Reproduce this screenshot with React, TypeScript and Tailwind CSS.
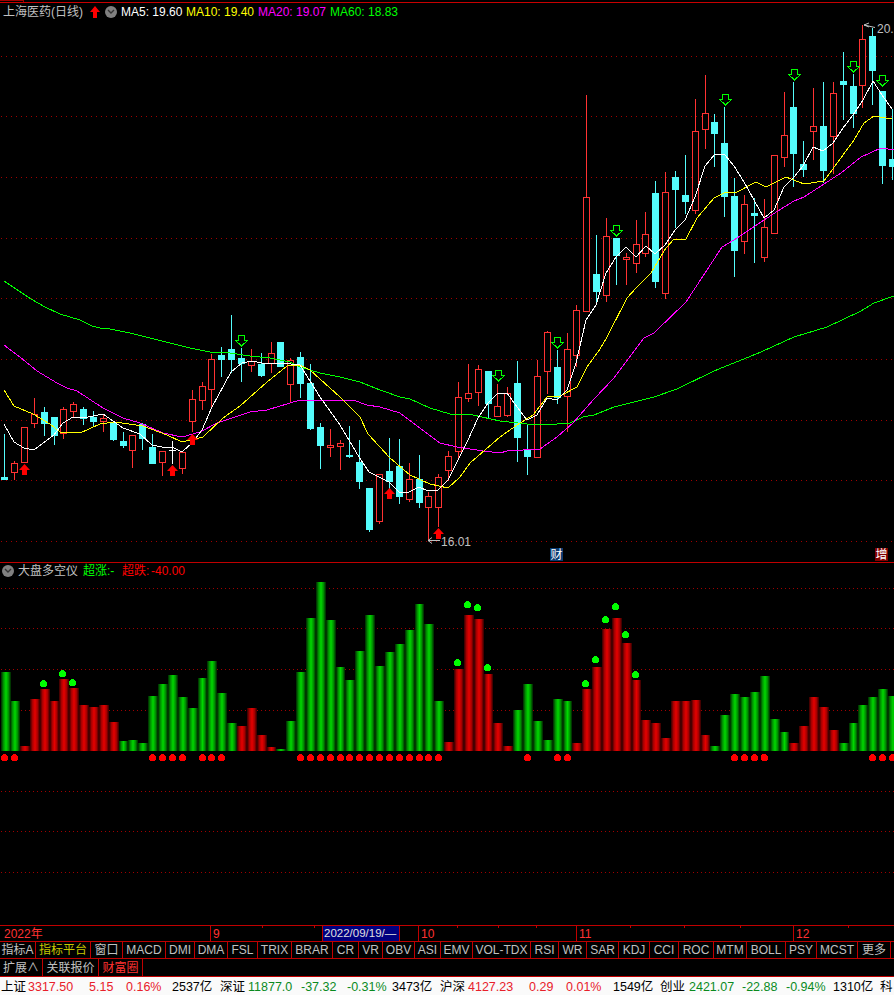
import React from "react";

type Candle = [number, number, number, number, "r" | "c" | "w"];

// hi, body top, body bottom, lo, colour
const candles: Candle[] = [
  [434, 477, 479, 479, "c"], [461, 463, 472, 479, "r"], [427, 427, 462, 462, "r"], [398, 414, 423, 427, "r"],
  [407, 412, 423, 435, "c"], [417, 417, 435, 444, "c"], [407, 409, 433, 438, "r"], [402, 404, 411, 417, "r"],
  [407, 409, 418, 424, "c"], [411, 417, 421, 425, "c"], [414, 418, 421, 431, "r"], [421, 422, 439, 440, "c"],
  [432, 441, 445, 447, "c"], [435, 435, 450, 467, "r"], [423, 424, 438, 449, "c"], [434, 447, 463, 463, "c"],
  [451, 451, 462, 475, "r"], [441, 450, 450, 463, "w"], [452, 452, 468, 473, "r"], [390, 399, 421, 431, "r"],
  [382, 386, 400, 409, "r"], [354, 359, 389, 407, "r"], [347, 355, 359, 376, "c"], [315, 349, 359, 372, "c"],
  [348, 358, 363, 381, "c"], [349, 361, 365, 371, "r"], [353, 364, 375, 376, "c"], [342, 353, 363, 372, "r"],
  [342, 342, 366, 366, "c"], [358, 360, 384, 402, "r"], [352, 357, 383, 397, "c"], [364, 383, 428, 429, "c"],
  [423, 427, 445, 468, "c"], [429, 445, 447, 456, "r"], [440, 443, 446, 469, "r"], [426, 455, 456, 457, "c"],
  [440, 462, 481, 488, "c"], [488, 488, 529, 531, "c"], [474, 474, 521, 523, "r"], [438, 471, 481, 490, "c"],
  [439, 466, 496, 503, "c"], [463, 479, 499, 501, "r"], [455, 479, 502, 507, "c"], [492, 496, 507, 539, "r"],
  [474, 477, 507, 526, "r"], [451, 456, 470, 480, "r"], [382, 397, 451, 457, "r"], [364, 393, 398, 401, "r"],
  [365, 369, 392, 405, "r"], [371, 371, 403, 417, "c"], [384, 406, 416, 416, "r"], [387, 393, 415, 416, "r"],
  [361, 383, 437, 461, "c"], [424, 450, 456, 474, "c"], [360, 376, 457, 457, "r"], [331, 332, 371, 393, "r"],
  [350, 367, 397, 403, "c"], [333, 349, 396, 431, "r"], [305, 310, 355, 366, "r"], [95, 197, 311, 311, "r"],
  [235, 274, 291, 302, "c"], [218, 236, 295, 301, "r"], [238, 238, 255, 284, "c"], [253, 257, 259, 284, "r"],
  [220, 244, 263, 272, "r"], [212, 234, 253, 256, "r"], [181, 193, 281, 287, "c"], [172, 192, 293, 298, "r"],
  [171, 177, 189, 227, "c"], [155, 195, 201, 213, "c"], [99, 131, 210, 213, "r"], [75, 113, 129, 148, "r"],
  [114, 122, 133, 166, "c"], [107, 143, 196, 216, "c"], [178, 196, 250, 276, "c"], [195, 204, 241, 253, "r"],
  [198, 213, 215, 262, "c"], [199, 227, 257, 261, "r"], [155, 155, 233, 233, "r"], [92, 135, 157, 166, "r"],
  [82, 107, 153, 186, "c"], [141, 164, 169, 176, "c"], [88, 126, 131, 159, "r"], [82, 126, 170, 182, "c"],
  [82, 93, 136, 173, "r"], [52, 81, 84, 119, "c"], [74, 86, 113, 127, "c"], [25, 39, 85, 107, "r"],
  [28, 36, 70, 104, "c"], [91, 91, 165, 183, "c"], [109, 159, 166, 179, "c"],
];

const ma5 = "4,424 14,442 24,448 34,450 54,435 63,423 73,417 83,418 103,414 123,428 140,434 152,445 162,447 172,447 182,452 192,443 202,430 212,407 231,372 242,363 252,361 262,363 281,363 300,365 320,397 340,425 359,457 369,472 389,482 399,492 409,492 419,487 428,491 438,490 448,480 458,460 468,440 478,418 488,403 498,393 507,393 517,407 527,420 537,415 547,398 557,400 567,390 576,363 586,320 596,305 606,273 616,257 626,247 636,257 646,246 655,254 665,245 675,230 685,220 695,197 705,166 715,154 725,155 734,166 744,182 754,200 764,218 774,210 784,187 794,177 803,166 813,147 823,151 833,143 843,128 853,115 863,100 873,81 882,95 892,109";
const ma10 = "4,390 14,406 33,414 50,424 60,432 80,433 100,424 115,422 143,426 167,435 182,442 203,437 223,418 240,406 267,382 287,366 300,365 310,370 340,397 360,417 368,434 390,458 410,475 430,484 448,488 460,477 470,463 500,437 517,425 533,415 547,397 560,396 577,387 587,367 600,349 607,337 627,298 636,288 651,273 666,248 674,239 686,239 697,218 714,198 726,192 737,192 756,182 766,187 786,177 804,184 824,181 854,140 864,123 874,116 892,119";
const ma20 = "4,345 20,357 37,371 57,383 67,388 77,391 103,408 123,418 140,423 163,433 182,437 200,432 217,423 250,412 267,410 300,400 353,400 367,405 380,407 400,413 413,423 440,443 457,447 483,451 500,453 507,451 540,449 557,437 573,423 594,399 614,378 644,338 654,333 686,302 722,247 734,240 761,222 781,209 794,201 804,197 821,186 841,173 861,157 881,148 894,150";
const ma60 = "4,281 31,299 45,307 60,314 80,320 92,326 100,328 110,329 130,333 150,338 170,343 190,348 210,352 230,353 250,356 270,358 290,362 300,367 320,373 340,377 360,382 380,390 400,397 410,399 430,408 450,414 473,415 500,421 527,424 540,424 557,424 570,423 583,417 594,415 614,407 654,397 677,389 714,371 761,352 794,337 827,327 861,311 874,303 894,296";

const upArrows = [[24, 464], [172, 465], [192, 434], [389, 488], [438, 528]];
const downArrows = [[241, 335], [498, 370], [557, 337], [616, 225], [725, 94], [794, 69], [853, 61], [882, 75]];

// top of each bar, g / r
const bars: [number, "g" | "r"][] = [
  [672, "g"], [701, "g"], [746, "r"], [699, "r"], [689, "r"], [701, "r"], [679, "r"], [688, "r"], [705, "r"], [707, "r"],
  [705, "r"], [722, "r"], [741, "g"], [740, "g"], [743, "g"], [696, "g"], [684, "g"], [675, "g"], [697, "g"], [708, "g"],
  [678, "g"], [661, "g"], [693, "g"], [723, "g"], [726, "r"], [708, "r"], [735, "r"], [747, "r"], [749, "g"], [721, "g"],
  [672, "g"], [618, "g"], [582, "g"], [620, "g"], [667, "g"], [680, "g"], [651, "g"], [615, "g"], [666, "g"], [652, "g"],
  [644, "g"], [630, "g"], [604, "g"], [624, "g"], [701, "g"], [742, "r"], [669, "r"], [615, "r"], [619, "r"], [674, "r"],
  [723, "r"], [746, "r"], [710, "g"], [684, "g"], [721, "g"], [740, "g"], [699, "g"], [701, "g"], [743, "r"], [689, "r"],
  [667, "r"], [629, "r"], [618, "r"], [643, "r"], [680, "r"], [720, "r"], [723, "r"], [738, "r"], [701, "r"], [701, "r"],
  [700, "r"], [735, "r"], [746, "g"], [715, "g"], [694, "g"], [697, "g"], [692, "g"], [676, "g"], [719, "g"], [732, "g"],
  [743, "r"], [726, "r"], [697, "r"], [707, "r"], [730, "r"], [743, "g"], [723, "g"], [705, "g"], [697, "g"], [689, "g"],
  [696, "g"],
];

const greenDots = [[43, 683], [62, 673], [72, 682], [457, 662], [467, 604], [477, 607], [487, 667], [585, 683], [595, 659], [605, 619], [615, 606], [625, 634], [635, 674]];
const redDots = [0, 1, 15, 16, 17, 18, 20, 21, 22, 30, 31, 32, 33, 34, 35, 36, 37, 38, 39, 40, 41, 42, 43, 44, 53, 56, 57, 74, 75, 76, 77, 88, 89, 90];

const col = (i: number) => Math.floor(4.7 + 9.865 * i);

const tabs: [string, number, string?][] = [
  ["指标A", 36], ["指标平台", 55, "text-[#c8c800]"], ["窗口", 32], ["MACD", 43], ["DMI", 29], ["DMA", 33], ["FSL", 30],
  ["TRIX", 34], ["BRAR", 41], ["CR", 26], ["VR", 24], ["OBV", 32], ["ASI", 26], ["EMV", 32], ["VOL-TDX", 58], ["RSI", 28],
  ["WR", 28], ["SAR", 32], ["KDJ", 31], ["CCI", 29], ["ROC", 35], ["MTM", 33], ["BOLL", 39], ["PSY", 31], ["MCST", 41], ["更多", 33],
];

const RED = "#e8202a";
const GREEN = "#0a8a1e";
const status: [string, string, number][] = [
  ["上证", "#000", 27], ["3317.50", RED, 61], ["5.15", RED, 37], ["0.16%", RED, 46], ["2537亿", "#000", 48], ["深证", "#000", 28],
  ["11877.0", GREEN, 53], ["-37.32", GREEN, 46], ["-0.31%", GREEN, 45], ["3473亿", "#000", 48], ["沪深", "#000", 28],
  ["4127.23", RED, 61], ["0.29", RED, 37], ["0.01%", RED, 47], ["1549亿", "#000", 47], ["创业", "#000", 29],
  ["2421.07", GREEN, 53], ["-22.88", GREEN, 44], ["-0.94%", GREEN, 47], ["1310亿", "#000", 47], ["科", "#000", 13],
];

const axisTicks = [262, 314, 457, 498, 536, 630, 684, 740, 848];

function DotLine({ y, gap }: { y: number; gap: number }) {
  return <line x1={1} x2={894} y1={y + 0.5} y2={y + 0.5} stroke="#a00000" strokeDasharray={`1 ${gap}`} />;
}

function UpArrow({ x, y }: { x: number; y: number }) {
  return (
    <polygon
      points={`${x + 0.5},${y} ${x + 6},${y + 6} ${x + 3},${y + 6} ${x + 3},${y + 11} ${x - 2},${y + 11} ${x - 2},${y + 6} ${x - 5},${y + 6}`}
      fill="#ff0000"
    />
  );
}

function DownArrow({ x, y }: { x: number; y: number }) {
  return (
    <path
      d={`M${x - 2.5} ${y + 0.5}h6v5h3l-6 5.5-6-5.5h3z`}
      fill="#000"
      stroke="#00ff00"
      shapeRendering="crispEdges"
    />
  );
}

function ChevronDot() {
  return (
    <span className="flex h-3 w-3 shrink-0 items-center justify-center rounded-full bg-[#808080]">
      <svg width="8" height="6" viewBox="0 0 8 6">
        <path d="M1 1l3 3 3-3" fill="none" stroke="#333" strokeWidth="1.4" />
      </svg>
    </span>
  );
}

function PriceChart() {
  return (
    <svg className="absolute inset-0" width="894" height="563" viewBox="0 0 894 563">
      <g shapeRendering="crispEdges">
        <rect x="0" y="2" width="894" height="1" fill="#c80000" />
        <rect x="0" y="0" width="23" height="1" fill="#a00000" />
        <rect x="23" y="0" width="1" height="2" fill="#a00000" />
        {[56, 116, 177, 238, 298, 359, 420, 480, 541].map((y) => (
          <DotLine key={y} y={y} gap={4} />
        ))}
        {candles.map(([hi, top, bot, lo, c], i) => {
          const x = col(i);
          const color = c === "r" ? "#ff3232" : c === "c" ? "#54fcfc" : "#ffffff";
          return (
            <g key={i}>
              <rect x={x} y={hi} width="1" height={lo - hi + 1} fill={color} />
              {c === "r" ? (
                <rect x={x - 2.5} y={top + 0.5} width="6" height={bot - top} fill="#000" stroke={color} />
              ) : (
                <rect x={x - 3} y={top} width="7" height={bot - top + 1} fill={color} />
              )}
            </g>
          );
        })}
        <polyline points={ma60} fill="none" stroke="#00ff00" />
        <polyline points={ma20} fill="none" stroke="#ff00ff" />
        <polyline points={ma10} fill="none" stroke="#ffff00" />
        <polyline points={ma5} fill="none" stroke="#ffffff" />
      </g>
      {upArrows.map(([x, y]) => (
        <UpArrow key={x} x={x} y={y} />
      ))}
      {downArrows.map(([x, y]) => (
        <DownArrow key={x} x={x} y={y} />
      ))}
      <path d="M440 540.5H428M432 537.5l-4 3 4 3" fill="none" stroke="#c0c0c0" />
      <path d="M875 27.5L864 25M869 23l-5 2 5 2" fill="none" stroke="#c0c0c0" />
    </svg>
  );
}

function IndicatorChart() {
  return (
    <svg className="absolute inset-0" width="894" height="363" viewBox="0 563 894 363">
      <defs>
        <linearGradient id="barG" x1="0" x2="1" y1="0" y2="0">
          <stop offset="0" stopColor="#002400" />
          <stop offset="0.25" stopColor="#009000" />
          <stop offset="0.5" stopColor="#00d800" />
          <stop offset="0.75" stopColor="#009000" />
          <stop offset="1" stopColor="#002000" />
        </linearGradient>
        <linearGradient id="barR" x1="0" x2="1" y1="0" y2="0">
          <stop offset="0" stopColor="#300000" />
          <stop offset="0.25" stopColor="#a80000" />
          <stop offset="0.5" stopColor="#e60000" />
          <stop offset="0.75" stopColor="#a80000" />
          <stop offset="1" stopColor="#2c0000" />
        </linearGradient>
      </defs>
      <g shapeRendering="crispEdges">
        {[588, 628, 669, 710, 791, 831, 872].map((y) => (
          <DotLine key={y} y={y} gap={3} />
        ))}
        {bars.map(([top, c], i) => (
          <rect
            key={i}
            x={Math.max(col(i) - 4, 1)}
            y={top}
            width={col(i + 1) - col(i)}
            height={751 - top}
            fill={c === "g" ? "url(#barG)" : "url(#barR)"}
          />
        ))}
        {greenDots.map(([x, y]) => (
          <circle key={x} cx={x + 0.5} cy={y + 0.5} r="3.5" fill="#00ff00" />
        ))}
        {redDots.map((i) => (
          <circle key={i} cx={col(i) + 0.5} cy="757.5" r="3.5" fill="#ff0000" />
        ))}
      </g>
    </svg>
  );
}

export default function App() {
  return (
    <div className="flex h-[995px] w-[894px] flex-col overflow-hidden bg-black font-['Liberation_Sans','Noto_Sans_CJK_SC',sans-serif] text-[12px] leading-none text-[#c0c0c0]">
      {/* kline panel */}
      <section className="relative h-[563px] shrink-0 border-b border-[#c00000]">
        <PriceChart />
        <div className="relative flex h-[24px] items-center pl-[3px]">
          <span className="w-[80px]">上海医药(日线)</span>
          <svg className="ml-[7px]" width="10" height="12" viewBox="0 0 10 12">
            <path d="M5 0l5 6H7v6H3V6H0z" fill="#ff0000" />
          </svg>
          <span className="ml-[5px]">
            <ChevronDot />
          </span>
          <span className="ml-[4px] w-[65px] text-white">MA5: 19.60</span>
          <span className="w-[72px] text-[#ffff00]">MA10: 19.40</span>
          <span className="w-[72px] text-[#ff00ff]">MA20: 19.07</span>
          <span className="text-[#00ff00]">MA60: 18.83</span>
        </div>
        <span className="absolute left-[441px] top-[536px]">16.01</span>
        <span className="absolute left-[877px] top-[23px]">20.</span>
        <span className="absolute left-[550px] top-[548px] flex h-[13px] w-[13px] items-center justify-center bg-[#0a3a70] text-white">财</span>
        <span className="absolute left-[875px] top-[548px] flex h-[13px] w-[13px] items-center justify-center bg-[#800000] text-white">增</span>
      </section>

      {/* indicator panel */}
      <section className="relative h-[363px] shrink-0 border-b border-[#c00000]">
        <IndicatorChart />
        <div className="relative flex h-[16px] items-center pl-[2px]">
          <ChevronDot />
          <span className="ml-[4px] w-[65px]">大盘多空仪</span>
          <span className="w-[39px] text-[#00ff00]">超涨:-</span>
          <span className="w-[29px] text-[#ff0000]">超跌:</span>
          <span className="text-[#ff0000]">-40.00</span>
        </div>
      </section>

      {/* time axis */}
      <div className="relative flex h-[16px] shrink-0 items-center border-b border-[#c00000] text-[#ff3232]">
        {axisTicks.map((x) => (
          <i key={x} className="absolute top-0 h-[2px] w-px bg-[#c00000]" style={{ left: x }} />
        ))}
        <span className="w-[210px] pl-[4px]">2022年</span>
        <span className="flex h-full w-[112px] items-center border-l border-[#c00000] pl-[2px]">9</span>
        <span className="flex h-full w-[78px] items-center border-x border-[#c00000] bg-[#000080] pl-[1px] text-[11.5px] text-[#e0e0e0]">2022/09/19/—</span>
        <span className="w-[18px]" />
        <span className="flex h-full w-[158px] items-center border-l border-[#c00000] pl-[2px]">10</span>
        <span className="flex h-full w-[217px] items-center border-l border-[#c00000] pl-[2px]">11</span>
        <span className="flex h-full items-center border-l border-[#c00000] pl-[2px]">12</span>
      </div>

      {/* indicator tabs */}
      <div className="flex h-[17px] shrink-0 border-b border-[#c00000]">
        {tabs.map(([name, w, color]) => (
          <span key={name} className={`flex shrink-0 items-center justify-center border-r border-[#c00000] ${color ?? ""}`} style={{ width: w }}>
            {name}
          </span>
        ))}
      </div>
      <div className="flex h-[18px] shrink-0 border-b border-[#c00000]">
        <span className="flex w-[43px] items-center justify-center border-r border-[#c00000]">扩展∧</span>
        <span className="flex w-[56px] items-center justify-center border-r border-[#c00000]">关联报价</span>
        <span className="flex w-[44px] items-center justify-center border-r border-[#c00000] text-[#ff3232]">财富圈</span>
      </div>

      {/* market status */}
      <div className="flex min-h-0 flex-1 items-center bg-[#fafafa] pl-px pt-[3px] text-[12.5px]">
        {status.map(([text, color, w], i) => (
          <span key={i} className="shrink-0 whitespace-nowrap" style={{ width: w, color }}>
            {text}
          </span>
        ))}
      </div>
    </div>
  );
}
